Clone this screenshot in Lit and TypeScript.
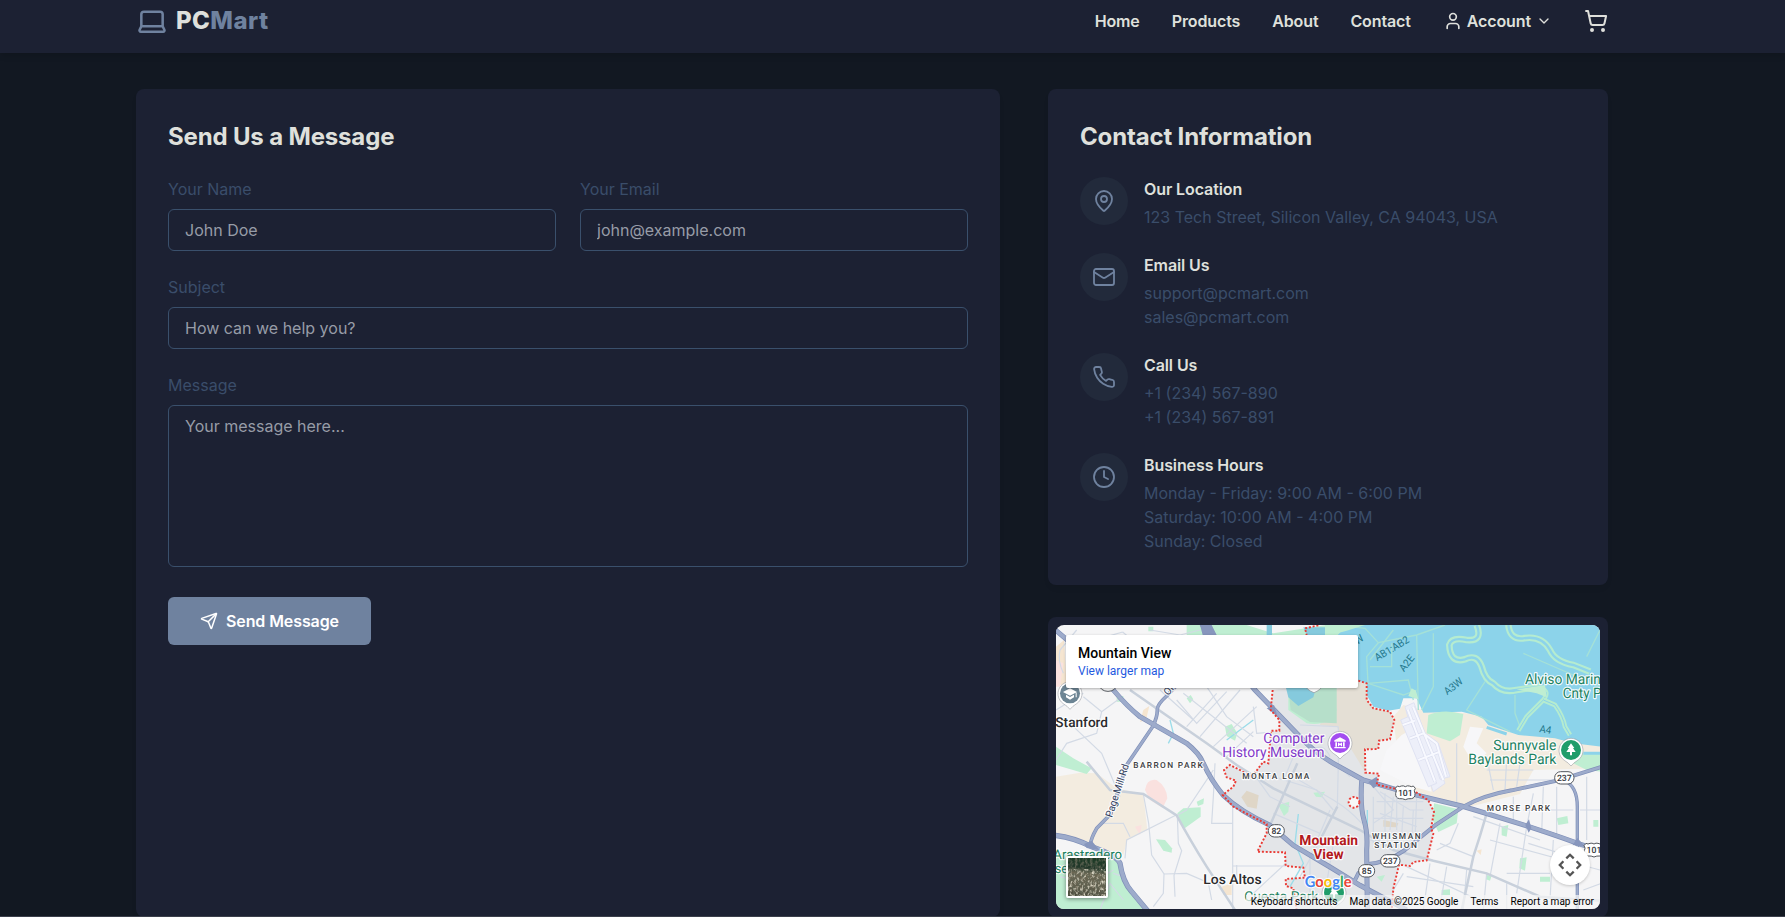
import { LitElement, html, svg, css } from "lit";
import { customElement } from "lit/decorators.js";

const lucide = (body: unknown, size: number, width = 2) => html`<svg
  width=${size} height=${size} viewBox="0 0 24 24" fill="none" stroke="currentColor"
  stroke-width=${width} stroke-linecap="round" stroke-linejoin="round">${body}</svg>`;

const icons = {
  laptop: svg`<path d="M20 16V7a2 2 0 0 0-2-2H6a2 2 0 0 0-2 2v9m16 0H4m16 0 1.28 2.55a1 1 0 0 1-.9 1.45H3.62a1 1 0 0 1-.9-1.45L4 16"/>`,
  user: svg`<path d="M19 21v-2a4 4 0 0 0-4-4H9a4 4 0 0 0-4 4v2"/><circle cx="12" cy="7" r="4"/>`,
  chevron: svg`<path d="m6 9 6 6 6-6"/>`,
  cart: svg`<circle cx="8" cy="21" r="1"/><circle cx="19" cy="21" r="1"/><path d="M2.05 2.05h2l2.66 12.42a2 2 0 0 0 2 1.58h9.78a2 2 0 0 0 1.95-1.57l1.65-7.43H5.12"/>`,
  pin: svg`<path d="M20 10c0 4.993-5.539 10.193-7.399 11.799a1 1 0 0 1-1.202 0C9.539 20.193 4 14.993 4 10a8 8 0 0 1 16 0"/><circle cx="12" cy="10" r="3"/>`,
  mail: svg`<rect width="20" height="16" x="2" y="4" rx="2"/><path d="m22 7-8.97 5.7a1.94 1.94 0 0 1-2.06 0L2 7"/>`,
  phone: svg`<path d="M22 16.92v3a2 2 0 0 1-2.18 2 19.79 19.79 0 0 1-8.63-3.07 19.5 19.5 0 0 1-6-6 19.79 19.79 0 0 1-3.07-8.67A2 2 0 0 1 4.11 2h3a2 2 0 0 1 2 1.72 12.84 12.84 0 0 0 .7 2.81 2 2 0 0 1-.45 2.11L8.09 9.91a16 16 0 0 0 6 6l1.27-1.27a2 2 0 0 1 2.11-.45 12.84 12.84 0 0 0 2.81.7A2 2 0 0 1 22 16.92z"/>`,
  clock: svg`<circle cx="12" cy="12" r="10"/><polyline points="12 6 12 12 16 14"/>`,
  send: svg`<path d="M14.536 21.686a.5.5 0 0 0 .937-.024l6.5-19a.496.496 0 0 0-.635-.635l-19 6.5a.5.5 0 0 0-.024.937l7.93 3.18a2 2 0 0 1 1.112 1.11z"/><path d="m21.854 2.147-10.94 10.939"/>`,
};

const contacts = [
  { icon: icons.pin, title: "Our Location", lines: ["123 Tech Street, Silicon Valley, CA 94043, USA"] },
  { icon: icons.mail, title: "Email Us", lines: ["support@pcmart.com", "sales@pcmart.com"] },
  { icon: icons.phone, title: "Call Us", lines: ["+1 (234) 567-890", "+1 (234) 567-891"] },
  {
    icon: icons.clock,
    title: "Business Hours",
    lines: ["Monday - Friday: 9:00 AM - 6:00 PM", "Saturday: 10:00 AM - 4:00 PM", "Sunday: Closed"],
  },
];

/* Map geometry: three units per screen pixel. */
const highways: [string, number][] = [
  ["M44 58L84 92 220 240Q262 290 300 320L440 400Q478 430 490 460Q512 510 550 556Q600 604 690 646L760 706 870 771 960 826 1100 900", 12],
  ["M420 215L380 258Q350 285 352 300Q352 322 338 350L260 465Q235 540 212 612L170 655Q150 690 152 706", 8],
  ["M44 676Q100 682 155 710Q230 735 240 760Q248 815 275 845L325 905", 13],
  ["M485 42L645 240 780 380Q820 425 880 460L970 510 1100 548 1265 588 1325 606 1455 646Q1560 680 1615 701L1684 722", 12],
  ["M1684 471L1555 511 1415 541Q1330 556 1270 590L1185 646 1095 720Q1040 758 985 762L955 790 940 820", 9],
  ["M965 512Q960 590 972 630Q984 670 980 720L982 905", 12],
  ["M1575 512Q1612 530 1612 590L1612 900", 7],
];

const arterials = [
  "M140 455L210 540 310 552 410 616Q450 690 500 770L585 900",
  "M270 240L500 400 590 465 700 535 960 660 1060 720 1180 752 1340 790 1500 860 1680 872",
  "M1340 610Q1320 680 1300 740L1265 900",
  "M840 690L892 590M690 646L772 460",
];

const streets = [
  "M48 300L130 250M90 340L185 430 240 560M130 260L185 305 240 265M185 305L170 370 80 400 48 450",
  "M330 60L420 75 480 60M200 80L248 66M110 60L60 120Q52 150 70 190M248 66L300 110",
  "M410 270L470 340 560 245M440 350L530 250M480 380L600 240M520 410L650 290M560 440L640 365M430 250L620 400",
  "M500 230L560 320 640 380M640 290L650 370 700 366M360 240L460 330M520 480L440 600 412 616",
  "M310 552L326 640 335 735 372 792 370 850 340 890M412 616L415 700 425 722 402 796 405 860",
  "M410 614L260 690 255 745M372 792L440 790 505 818 515 870M180 640L250 640 270 680",
  "M520 560L515 640 578 640M578 580V900M520 560L525 460M578 768H740M640 850L737 760M590 820V765",
  "M735 500L760 440 815 420Q850 395 870 440M750 590L690 560 640 490M760 500L880 570Q930 600 965 640",
  "M895 350V470L930 500M895 460L892 590 830 710 780 800M780 345L895 350",
  "M700 500L830 540 880 600M700 610L840 670M870 600L810 740 810 890M840 820H930M880 700L860 820",
  "M1000 530L1060 600 1000 640M1020 545L1110 600 1150 600M1060 560L1050 660M1090 590L1085 680M1020 610L1130 650M990 690L1060 710M1120 600L1115 700",
  "M1000 560V700M1035 550V690M1010 575H1150M1000 625H1150M1070 560V660M1130 560L1125 690",
  "M1170 760L1150 900M1220 770L1200 890M1280 780L1270 900M1340 790L1330 900M1400 820V900M1100 800L1300 830",
  "M1255 640L1230 700 1190 720M1200 700L1300 740M1300 620L1500 690M1380 640L1350 800M1460 650L1430 850M1540 690L1530 870",
  "M1350 690L1680 780M1420 560V640M1480 550L1460 650M1510 530L1505 670M1550 530V680M1400 790H1530M1560 780L1650 720",
  "M1250 400V580M1340 440L1360 540M1400 450L1395 540M1440 460L1430 530M1640 500V690M1620 600H1684M1630 840L1684 820M1450 600H1600",
  "M1340 480H1480M1350 510H1540M1090 790L1060 840M1100 770L1380 900M1465 700L1600 742",
  "M60 800L150 820 220 780M250 870L210 820 180 900M220 790L250 800",
];

const greens = [
  "M440 40L620 45 700 70 860 45 920 45 880 90 440 75Z",
  "M745 234H875L890 300Q870 350 800 340L745 300Z",
  "M48 410L100 445 155 475 140 492 48 465Z",
  "M412 610L430 595 482 592 482 620 430 658Z M470 575L492 565 490 582 474 588Z",
  "M348 688L375 690 396 715 395 728 370 722Z",
  "M555 350L575 342 592 370 585 392 560 378Z M440 265L452 255 460 268 450 280Z M325 50H340V64H325Z",
  "M715 585L748 575 745 605 732 618Z M820 548L855 545 845 562 828 560Z",
  "M48 730H100L225 735 250 790 260 830 315 900H48Z",
  "M1165 315Q1210 295 1270 312L1260 375 1230 394 1160 370Z",
  "M1182 580L1255 598 1250 640 1195 666 1178 630Z",
  "M1385 650L1405 645 1400 680 1385 676Z M1550 625L1582 618 1585 640 1555 645Z M1440 745L1460 742 1455 782 1438 775Z M1660 630H1675V650H1660Z",
  "M1500 800H1530V815H1500Z M1340 795L1355 797 1350 812 1338 808Z M1205 840L1230 838V855H1205Z M1010 800L1035 795 1025 815Z",
  "M1575 430H1684V485L1640 480 1590 455Z M230 258H250V275H230Z",
];

const levees = [
  "M860 70L920 48 975 55 1015 98 980 140 984 220 1090 255 1130 240",
  "M990 150L1060 60M990 170H1055V100M1015 98L1130 75 1215 45M1130 75L1135 300M1180 70V230L1145 300M985 220L1105 210 1120 270",
  "M1335 215L1280 300 1410 365M1425 255V310L1440 350M1450 130L1680 230M1640 140L1680 60",
];

const sloughs = [
  "M1310 45Q1330 95 1280 90Q1235 80 1228 105Q1230 160 1275 148Q1310 130 1325 170Q1335 210 1360 220Q1385 250 1430 240L1500 230",
  "M1405 45Q1410 90 1450 85Q1505 75 1530 120Q1545 155 1600 165L1650 185",
];

const creeks = [
  "M1505 235Q1530 245 1510 270L1460 320 1435 362",
  "M1510 270L1545 285Q1570 320 1575 350L1590 375",
];

const cityLeft = "698,240 692,300 718,330 718,362 693,362 685,460 670,455 635,502 600,480 570,465 552,480 560,502 588,512 580,530 548,555 580,590 680,642 680,670 652,725 735,727 737,768 790,773 795,803 737,807 738,828 760,835 770,900";
const cityRight = "955,212 980,220 980,270 1000,295 1050,305 1063,330 1050,388 1017,392 1015,417 975,418 976,488 1017,491 1010,524 1065,536 1130,548 1165,571 1182,606 1173,656 1180,671 1160,751 1120,756 1110,768 1077,764 1060,836 1055,900";

interface MapLabel { text: string; x: number; y: number; w: number; size: number; kind: string; turn?: number }
const labels: MapLabel[] = [
  { text: "Stanford", x: 46, y: 350, w: 158, size: 41, kind: "town" },
  { text: "Los Altos", x: 490, y: 822, w: 175, size: 41, kind: "town" },
  { text: "Computer", x: 670, y: 399, w: 183, size: 43, kind: "museum" },
  { text: "History Museum", x: 547, y: 441, w: 306, size: 43, kind: "museum" },
  { text: "BARRON PARK", x: 280, y: 474, w: 208, size: 25, kind: "hood" },
  { text: "MONTA LOMA", x: 607, y: 507, w: 201, size: 25, kind: "hood" },
  { text: "WHISMAN", x: 996, y: 687, w: 146, size: 25, kind: "hood" },
  { text: "STATION", x: 1003, y: 714, w: 128, size: 25, kind: "hood" },
  { text: "MORSE PARK", x: 1340, y: 603, w: 190, size: 25, kind: "hood" },
  { text: "Mountain", x: 778, y: 705, w: 176, size: 42, kind: "city" },
  { text: "View", x: 820, y: 747, w: 91, size: 42, kind: "city" },
  { text: "Alviso Marina", x: 1455, y: 222, w: 250, size: 43, kind: "park" },
  { text: "Cnty Park", x: 1568, y: 264, w: 172, size: 43, kind: "park" },
  { text: "Sunnyvale", x: 1360, y: 420, w: 189, size: 43, kind: "park" },
  { text: "Baylands Park", x: 1285, y: 462, w: 264, size: 43, kind: "park" },
  { text: "Arastradero", x: 40, y: 746, w: 206, size: 40, kind: "park" },
  { text: "serve", x: 44, y: 788, w: 92, size: 40, kind: "park" },
  { text: "Cuesta Park", x: 613, y: 872, w: 222, size: 41, kind: "park" },
  { text: "AB1:AB2", x: 1012, y: 154, w: 114, size: 31, kind: "pond", turn: -31 },
  { text: "A2E", x: 1092, y: 187, w: 54, size: 31, kind: "pond", turn: -52 },
  { text: "A3W", x: 1222, y: 256, w: 62, size: 31, kind: "pond", turn: -38 },
  { text: "A4", x: 1497, y: 366, w: 36, size: 31, kind: "pond", turn: 10 },
  { text: "W", x: 952, y: 106, w: 28, size: 31, kind: "pond", turn: -38 },
  { text: "Page Mill Rd", x: 216, y: 624, w: 166, size: 31, kind: "road", turn: -72 },
  { text: "Or", x: 385, y: 258, w: 30, size: 31, kind: "road", turn: -50 },
];

const shields = [
  { n: "101", x: 1096, y: 548, us: true },
  { n: "101", x: 1662, y: 720, us: true },
  { n: "237", x: 1573, y: 503, us: false },
  { n: "237", x: 1051, y: 752, us: false },
  { n: "85", x: 980, y: 782, us: false },
  { n: "82", x: 709, y: 662, us: false },
];

@customElement("area-map")
class AreaMap extends LitElement {
  static styles = css`
    :host { display: block; position: relative; height: 284px; border-radius: 8px; overflow: hidden; font-family: Roboto, sans-serif; color: #000; background: #f5f5f6; }
    .canvas { display: block; width: 100%; height: 100%; }
    .hw-case { fill: none; stroke: #7f8fb8; }
    .hw { fill: none; stroke: #9dabcb; }
    .art { fill: none; stroke: #c8d0db; stroke-width: 7.5; }
    .st { fill: none; stroke: #d3dae5; stroke-width: 3.6; }
    .border { fill: none; stroke: #ea3a34; stroke-width: 5.8; stroke-dasharray: 6 5.5; }
    .island { fill: #f7f7f7; }
    text { paint-order: stroke; stroke: #fff; stroke-width: 7; stroke-linejoin: round; stroke-opacity: .9; text-rendering: geometricPrecision; }
    .town { fill: #2b2b2e; font-weight: 500; }
    .museum { fill: #8138c9; }
    .hood { fill: #3d3f44; font-weight: 500; }
    .city { fill: #b3191c; font-weight: 700; }
    .park { fill: #1c8261; }
    .pond { fill: #24788c; stroke: none; }
    .road { fill: #34415e; }
    .num { fill: #33363b; stroke: none; font-size: 26px; font-weight: 500; text-anchor: middle; }
    .google { font: 700 46px Lato, sans-serif; }
    .place { position: absolute; left: 10px; top: 10px; width: 292px; height: 53px; box-sizing: border-box; padding: 9px 12px 0; background: #fff; border-radius: 2px; box-shadow: 0 1px 3px rgba(0, 0, 0, .3); }
    .name { font-size: 14px; font-weight: 500; line-height: 19px; }
    .larger { font-size: 12px; line-height: 17px; color: #1f5ae0; }
    .thumb { position: absolute; left: 10px; top: 231px; width: 38px; height: 38px; border: 2px solid #fff; border-radius: 2px; box-shadow: 0 1px 4px rgba(0, 0, 0, .45); overflow: hidden; }
    .thumb svg { display: block; }
    .pan { position: absolute; left: 494px; top: 220px; width: 40px; height: 40px; border-radius: 50%; background: #fff; box-shadow: 0 1px 3px rgba(0, 0, 0, .2); }
    .terms { position: absolute; right: 0; bottom: 0; height: 14px; display: flex; align-items: center; gap: 12px; padding: 0 6px 0 5px; font-size: 10px; background: rgba(245, 245, 245, .72); white-space: nowrap; }
  `;

  private shield(s: { n: string; x: number; y: number; us: boolean }) {
    const w = s.n.length > 2 ? 29 : 24;
    return svg`<g transform="translate(${s.x} ${s.y})">
      ${s.us
        ? svg`<path d="M-24 -20Q-18 -16 -12 -20Q-6 -22 0 -18Q6 -22 12 -20Q18 -16 24 -20L30 -13Q24 -6 29 2Q30 16 18 18Q8 17 0 21Q-8 17 -18 18Q-30 16 -29 2Q-24 -6 -30 -13Z" fill="#fff" stroke="#54585e" stroke-width="3"/>`
        : svg`<rect x=${-w} y="-18" width=${w * 2} height="37" rx="18" fill="#fff" stroke="#54585e" stroke-width="3"/>`}
      <text class="num" y="9">${s.n}</text></g>`;
  }

  private marker(x: number, y: number, color: string, glyph: unknown) {
    return svg`<g transform="translate(${x} ${y})">
      <path d="M0 48Q-8 38 -20 31A36 36 0 1 1 20 31Q8 38 0 48Z" fill="#fff" stroke="#8a8f96" stroke-opacity=".6" stroke-width="2.5"/>
      <circle r="30" fill=${color}/>${glyph}</g>`;
  }

  render() {
    return html`
      <svg class="canvas" viewBox="48 45 1632 852" preserveAspectRatio="none">
        <path fill="#f3ece0" d="M1060 320L1090 285 1150 300 1350 315 1560 370 1684 400V475L1480 480 1440 552 1290 590 1130 545 1080 500Z M48 500L120 488 170 490 230 535 310 552 322 660 262 690 250 735 150 710 48 676Z"/>
        <path fill="#f5e5d0" d="M48 110L72 90 80 230 48 220Z M545 830L575 820V855H550Z M310 300L328 288 318 330 300 336Z M1310 722L1325 718 1322 735Z"/>
        <path fill="#fae1df" d="M315 540Q320 505 350 510Q380 530 382 565L368 594 330 570Z M48 150L70 160 60 230 48 230Z M285 650L305 645 300 675Z"/>
        <path fill="#f7f7f9" d="M1085 375L1130 350 1150 420 1175 545 1120 530 1060 500 1020 480 1040 420Z M1290 350L1330 355 1310 400 1340 430 1300 460 1270 410Z"/>
        <path fill="#8cd3ea" d="M855 45H1684V410L1600 400 1545 385 1435 375 1345 345 1325 320 1265 305 1150 308 1130 265 1090 265 1080 296 1045 302 1000 290 955 212Z"/>
        <path fill="#e3e5e8" d="M${cityLeft.replace(/ /g, "L")}L${cityRight.split(" ").reverse().join("L")}Z"/>
        <path fill="#e4dfd5" d="M840 345L880 240 955 215 980 222 982 272 1000 295 1048 305 1060 330 1048 386 1015 392 1013 415 975 418 972 480 935 420 890 350Z"/>
        <path fill="#ddd0b9" opacity=".7" d="M604 562L620 542 656 556 650 596 622 590Z M1030 630L1075 640 1070 652 1030 650Z"/>
        ${greens.map((d) => svg`<path fill="#bfeed2" d=${d}/>`)}
        <path fill="#b6dfca" d="M745 234H890V340L810 336 752 300Z"/>
        <path fill="#85cadd" d="M738 234H828L820 262 775 288 745 262Z M790 52H870V75H800Z M680 45H696V75H680Z"/>
        ${levees.map((d) => svg`<path fill="none" stroke="#a5e1d7" stroke-width="4" d=${d}/>`)}
        ${creeks.map((d) => svg`<path fill="none" stroke="#b5ecd0" stroke-width="14" stroke-linejoin="round" d=${d}/><path fill="none" stroke="#8cd3ea" stroke-width="3" d=${d}/>`)}
        ${sloughs.map((d) => svg`<path fill="none" stroke="#b5ecd0" stroke-width="20" stroke-linejoin="round" d=${d}/><path fill="none" stroke="#8cd3ea" stroke-width="7" d=${d}/>`)}
        <path fill="#bfeed2" d="M855 45H975L920 62 872 75H855Z M1115 235L1128 242 1135 268 1105 258Z M1430 238L1515 225 1520 262 1490 250Z"/>
        <path fill="none" stroke="#8cd3ea" stroke-width="9" d="M1630 430H1684M1340 352L1400 372"/>
        <path fill="none" stroke="#9bdce9" stroke-width="4" d="M390 330L400 370 385 400M775 612L765 700 790 760 750 830M982 600V900M560 390L640 330"/>
        <g fill="#edeff9" stroke="#dfe2f2" stroke-width="3">
          <path d="M1095 290L1122 278 1150 360 1215 520 1180 545 1125 400Z"/>
          <path d="M1082 330L1105 320 1190 520 1165 530Z"/>
          <path d="M1160 380L1195 400 1230 500 1200 508Z"/>
        </g>
        <path fill="none" stroke="#dcdff0" stroke-width="10" d="M1103 298L1185 515M1119 290L1210 510M1150 370L1190 400 1218 500M1088 345L1125 332M1110 385L1150 370M1135 450L1200 425"/>
        <path fill="none" stroke="#f8f9ff" stroke-width="6" d="M1103 298L1185 515M1119 290L1210 510M1150 370L1190 400 1218 500M1088 345L1125 332M1110 385L1150 370M1135 450L1200 425"/>
        ${streets.map((d) => svg`<path class="st" d=${d}/>`)}
        ${arterials.map((d) => svg`<path class="art" d=${d}/>`)}
        ${highways.map(([d, w]) => svg`<path class="hw-case" stroke-width=${w + 3} d=${d}/>`)}
        ${highways.map(([d, w]) => svg`<path class="hw" stroke-width=${w - 1} d=${d}/>`)}
        <path fill="#8796bd" d="M480 45L515 45 530 75H488Z M985 516L1010 500 1015 525 1000 535Z M1456 645L1467 628 1474 655 1466 668Z M1598 705L1612 684 1636 710Z M680 295L702 285 712 318Z M132 702L155 692 178 720 140 714Z"/>
        <polyline class="border" points="835,46 795,55 800,75"/>
        <polyline class="border" points=${cityLeft}/>
        <polyline class="border" points=${cityRight}/>
        <circle class="border island" cx="942" cy="577" r="16"/>
        <ellipse cx="204" cy="226" rx="25" ry="18" fill="#fff" stroke="#54585e" stroke-width="3"/>
        <path d="M795 225Q800 240 822 248Q842 240 850 225Z" fill="#fff" stroke="#8a8f96" stroke-width="2"/>
        ${shields.map((s) => this.shield(s))}
        ${this.marker(90, 250, "#6d8594", svg`<path fill="#fff" d="M0 -15L21 -4 0 7 -21 -4Z M-12 4L0 11 12 4V12L0 19 -12 12Z M17 -2H20V12H17Z"/>`)}
        ${this.marker(900, 399, "#a34df0", svg`<path fill="#fff" d="M0 -17L17 -8V-4H-17V-8Z M-14 -2H-9V11H-14Z M9 -2H14V11H9Z M-17 12H17V16H-17Z M-6 -1H-3L0 3 3 -1H6V10H3V5L0 8 -3 5V10H-6Z"/>`)}
        ${this.marker(1593, 420, "#1f9d6a", svg`<path fill="#fff" d="M0 -20L10 -6H6L14 6H3V16H-3V6H-14L-6 -6H-10Z"/>`)}
        ${this.marker(882, 848, "#1f9d6a", svg`<path fill="#fff" d="M0 -20L10 -6H6L14 6H3V16H-3V6H-14L-6 -6H-10Z"/>`)}
        ${labels.map((l) => svg`<text class=${l.kind} x=${l.x} y=${l.y} font-size=${l.size} textLength=${l.w}
          lengthAdjust=${l.kind === "hood" ? "spacing" : "spacingAndGlyphs"}
          transform=${l.turn ? `rotate(${l.turn} ${l.x} ${l.y})` : ""}>${l.text}</text>`)}
        <text class="google" x="794" y="831" textLength="141" lengthAdjust="spacingAndGlyphs"><tspan fill="#4285f4">G</tspan><tspan fill="#ea4335">o</tspan><tspan fill="#fbbc04">o</tspan><tspan fill="#4285f4">g</tspan><tspan fill="#34a853">l</tspan><tspan fill="#ea4335">e</tspan></text>
      </svg>
      <div class="place">
        <div class="name">Mountain View</div>
        <div class="larger">View larger map</div>
      </div>
      <div class="thumb">
        <svg width="38" height="38" viewBox="0 0 38 38">
          <defs>
            <linearGradient id="ground" x1="0" y1="0" x2="-0.1" y2="1">
              <stop offset="0" stop-color="#1d3a26"/><stop offset=".2" stop-color="#22382a"/>
              <stop offset=".36" stop-color="#6b6753"/><stop offset=".7" stop-color="#625f4d"/><stop offset="1" stop-color="#454538"/>
            </linearGradient>
            <filter id="grass" x="0" y="0" width="1" height="1">
              <feTurbulence type="fractalNoise" baseFrequency=".4 .25" numOctaves="3" seed="4"/>
              <feColorMatrix values="0 0 0 0 .12  0 0 0 0 .13  0 0 0 0 .09  2.6 0 0 0 -1"/>
            </filter>
            <filter id="straw" x="0" y="0" width="1" height="1">
              <feTurbulence type="fractalNoise" baseFrequency=".45 .3" numOctaves="3" seed="11"/>
              <feColorMatrix values="0 0 0 0 .72  0 0 0 0 .68  0 0 0 0 .56  2.6 0 0 0 -1.2"/>
            </filter>
          </defs>
          <rect width="38" height="38" fill="url(#ground)"/>
          <rect width="38" height="38" filter="url(#grass)"/>
          <rect y="11" width="38" height="27" filter="url(#straw)"/>
        </svg>
      </div>
      <div class="pan">
        <svg width="40" height="40" viewBox="-20 -20 40 40" fill="none" stroke="#555" stroke-width="2.3">
          <path d="M-3.7 -6.6L0 -10.2 3.7 -6.6M-3.7 6.6L0 10.2 3.7 6.6M-6.6 -3.7L-10.2 0 -6.6 3.7M6.6 -3.7L10.2 0 6.6 3.7"/>
        </svg>
      </div>
      <div class="terms"><span>Keyboard shortcuts</span><span>Map data ©2025 Google</span><span>Terms</span><span>Report a map error</span></div>`;
  }
}

@customElement("app-root")
class AppRoot extends LitElement {
  static styles = css`
    :host { display: block; height: 917px; overflow: hidden; background: #121822; color: #dfe0dc; font: 400 16px/24px Inter, sans-serif; position: relative; }
    :host::after { content: ""; position: absolute; left: 0; right: 0; bottom: 0; height: 1px; background: #3b3f4b; }
    svg { display: block; flex: none; }
    .header { height: 53px; box-sizing: border-box; padding: 0 177px 11px 136px; display: flex; align-items: center; justify-content: space-between; background: #1c2133; box-shadow: 0 4px 6px -1px rgba(0, 0, 0, .12); }
    .brand { display: flex; align-items: center; gap: 8px; color: #6f829f; font-size: 24px; font-weight: 800; line-height: 32px; letter-spacing: .42px; }
    .brand b { color: #dfe0dc; font-weight: 800; }
    .nav { display: flex; align-items: center; gap: 32px; font-weight: 600; letter-spacing: -.12px; }
    .account { display: flex; align-items: center; gap: 4px; }
    .chev { margin-left: 1px; }
    .main { padding: 36px 177px 0 136px; display: grid; grid-template-columns: 864px 560px; gap: 48px; }
    .card { background: #1c2133; border-radius: 8px; padding: 32px; box-shadow: 0 4px 6px -1px rgba(0, 0, 0, .06); }
    .side { display: flex; flex-direction: column; gap: 32px; }
    .heading { margin: 0 0 24px; font-size: 24px; line-height: 32px; font-weight: 700; letter-spacing: -.16px; }
    .form { display: flex; flex-direction: column; gap: 24px; align-items: stretch; }
    .pair { display: grid; grid-template-columns: 1fr 1fr; gap: 24px; }
    .field { display: flex; flex-direction: column; gap: 8px; color: #3a4d6a; }
    .control { box-sizing: border-box; width: 100%; height: 42px; padding: 8px 16px; margin: 0; border: 1px solid #3a506c; border-radius: 6px; background: transparent; font: inherit; color: #dfe0dc; outline: none; resize: none; }
    .control::placeholder { color: #979ca7; opacity: 1; }
    .area { height: 162px; margin-bottom: 6px; overflow: hidden; }
    .send { align-self: flex-start; display: flex; align-items: center; gap: 8px; height: 48px; padding: 0 32px; border: 0; border-radius: 6px; background: #6f829f; color: #fff; font: inherit; font-weight: 600; letter-spacing: -.1px; }
    .list { display: flex; flex-direction: column; gap: 24px; }
    .item { display: flex; gap: 16px; }
    .badge { flex: none; width: 48px; height: 48px; border-radius: 50%; display: grid; place-items: center; background: #222a3b; color: #6f829f; }
    .title { font-weight: 600; margin-bottom: 4px; letter-spacing: -.1px; }
    .line { color: #3a4d6a; }
    .map-card { background: #1c2133; border-radius: 8px; padding: 8px; }
  `;

  render() {
    return html`
      <header class="header">
        <div class="brand">${lucide(icons.laptop, 32, 1.9)}<span><b>PC</b>Mart</span></div>
        <nav class="nav">
          <span>Home</span><span>Products</span><span>About</span><span>Contact</span>
          <span class="account">${lucide(icons.user, 20)}<span>Account</span><span class="chev">${lucide(icons.chevron, 16)}</span></span>
          ${lucide(icons.cart, 24)}
        </nav>
      </header>
      <main class="main">
        <section class="card">
          <h2 class="heading">Send Us a Message</h2>
          <form class="form">
            <div class="pair">
              <label class="field">Your Name<input class="control" placeholder="John Doe" /></label>
              <label class="field">Your Email<input class="control" placeholder="john@example.com" /></label>
            </div>
            <label class="field">Subject<input class="control" placeholder="How can we help you?" /></label>
            <label class="field">Message<textarea class="control area" placeholder="Your message here..."></textarea></label>
            <button class="send" type="button">${lucide(icons.send, 18)}Send Message</button>
          </form>
        </section>
        <div class="side">
          <section class="card">
            <h2 class="heading">Contact Information</h2>
            <div class="list">
              ${contacts.map((c) => html`<div class="item">
                <div class="badge">${lucide(c.icon, 24, 1.8)}</div>
                <div><div class="title">${c.title}</div>${c.lines.map((l) => html`<div class="line">${l}</div>`)}</div>
              </div>`)}
            </div>
          </section>
          <section class="map-card"><area-map></area-map></section>
        </div>
      </main>`;
  }
}
